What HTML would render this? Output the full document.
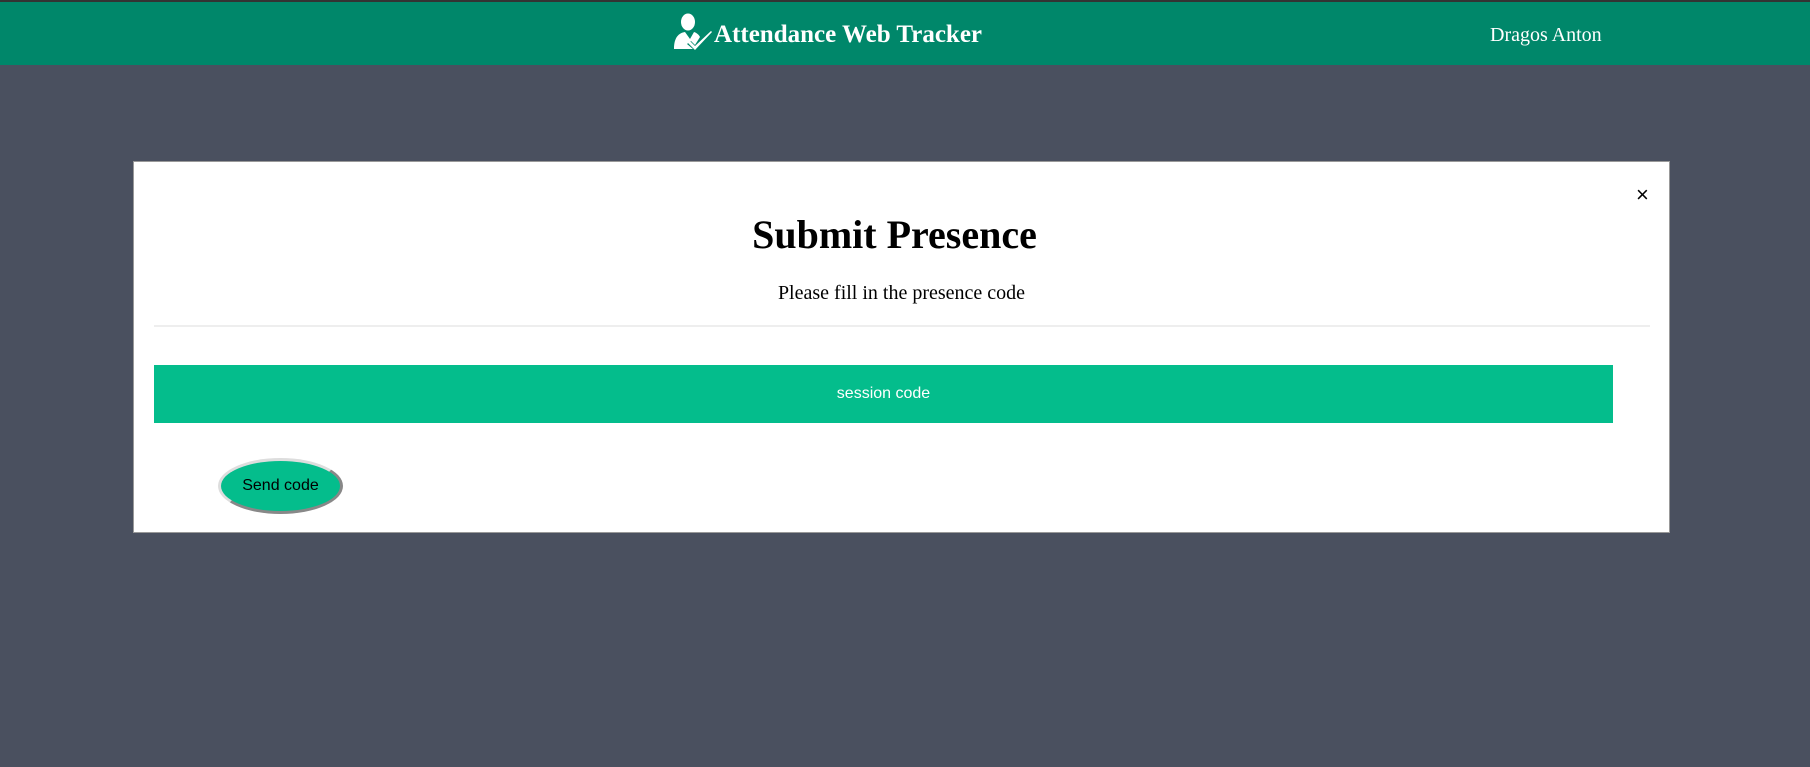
<!DOCTYPE html>
<html><head><style>
body{margin:0;width:1810px;height:767px;background:#4a505f;font-family:"Liberation Serif",serif;position:relative;overflow:hidden}
.hdr{position:absolute;left:0;top:0;width:1810px;height:65px;background:#00876a;border-top:2px solid #333;box-sizing:border-box}
.title{position:absolute;left:714px;top:19px;color:#fff;font-weight:bold;font-size:25px}
.user{position:absolute;left:1490px;top:22px;color:#fff;font-size:20px}
.modal{position:absolute;left:133px;top:161px;width:1537px;height:372px;background:#fff;border:1px solid #999;box-sizing:border-box}
h1{position:absolute;left:0;width:1521px;text-align:center;top:49px;margin:0;font-size:40px}
.sub{position:absolute;left:0;width:100%;text-align:center;top:120px;font-size:20px}
.div{position:absolute;left:20px;width:1496px;top:163px;height:2px;background:#eee}
.bar{position:absolute;left:20px;top:203px;width:1459px;height:58px;background:#04bd8c;color:#fff;font-family:"Liberation Sans",sans-serif;font-size:16px;text-align:center;line-height:58px}
.btn{position:absolute;left:84px;top:296px;width:125px;height:56px;border-radius:50%;background:#04bd8c;border:3px solid;border-color:#ddd #888 #888 #ddd;box-sizing:border-box;font-family:"Liberation Sans",sans-serif;font-size:16px;text-align:center;line-height:50px}
.x{position:absolute;left:1502px;top:20px;font-family:"Liberation Sans",sans-serif;font-size:22px}
</style></head><body>
<div class="hdr">
<svg style="position:absolute;left:673px;top:11px" width="40" height="38" viewBox="0 0 40 38"><g fill="#fff"><ellipse cx="15" cy="9" rx="7" ry="8.5"/><path d="M1 36 C1 24 6 20 12 19 L17 26 L21 19 C24 20 26 22 27 24 L22 32 L18 28 L14 31 L20 36 Z"/><path d="M17 28 L22 33 L38 18 L39 19 L22 37 L15 30 Z"/></g></svg>
<div class="title">Attendance Web Tracker</div>
<div class="user">Dragos Anton</div>
</div>
<div class="modal">
<div class="x">×</div>
<h1>Submit Presence</h1>
<div class="sub">Please fill in the presence code</div>
<div class="div"></div>
<div class="bar">session code</div>
<div class="btn">Send code</div>
</div>
</body></html>
